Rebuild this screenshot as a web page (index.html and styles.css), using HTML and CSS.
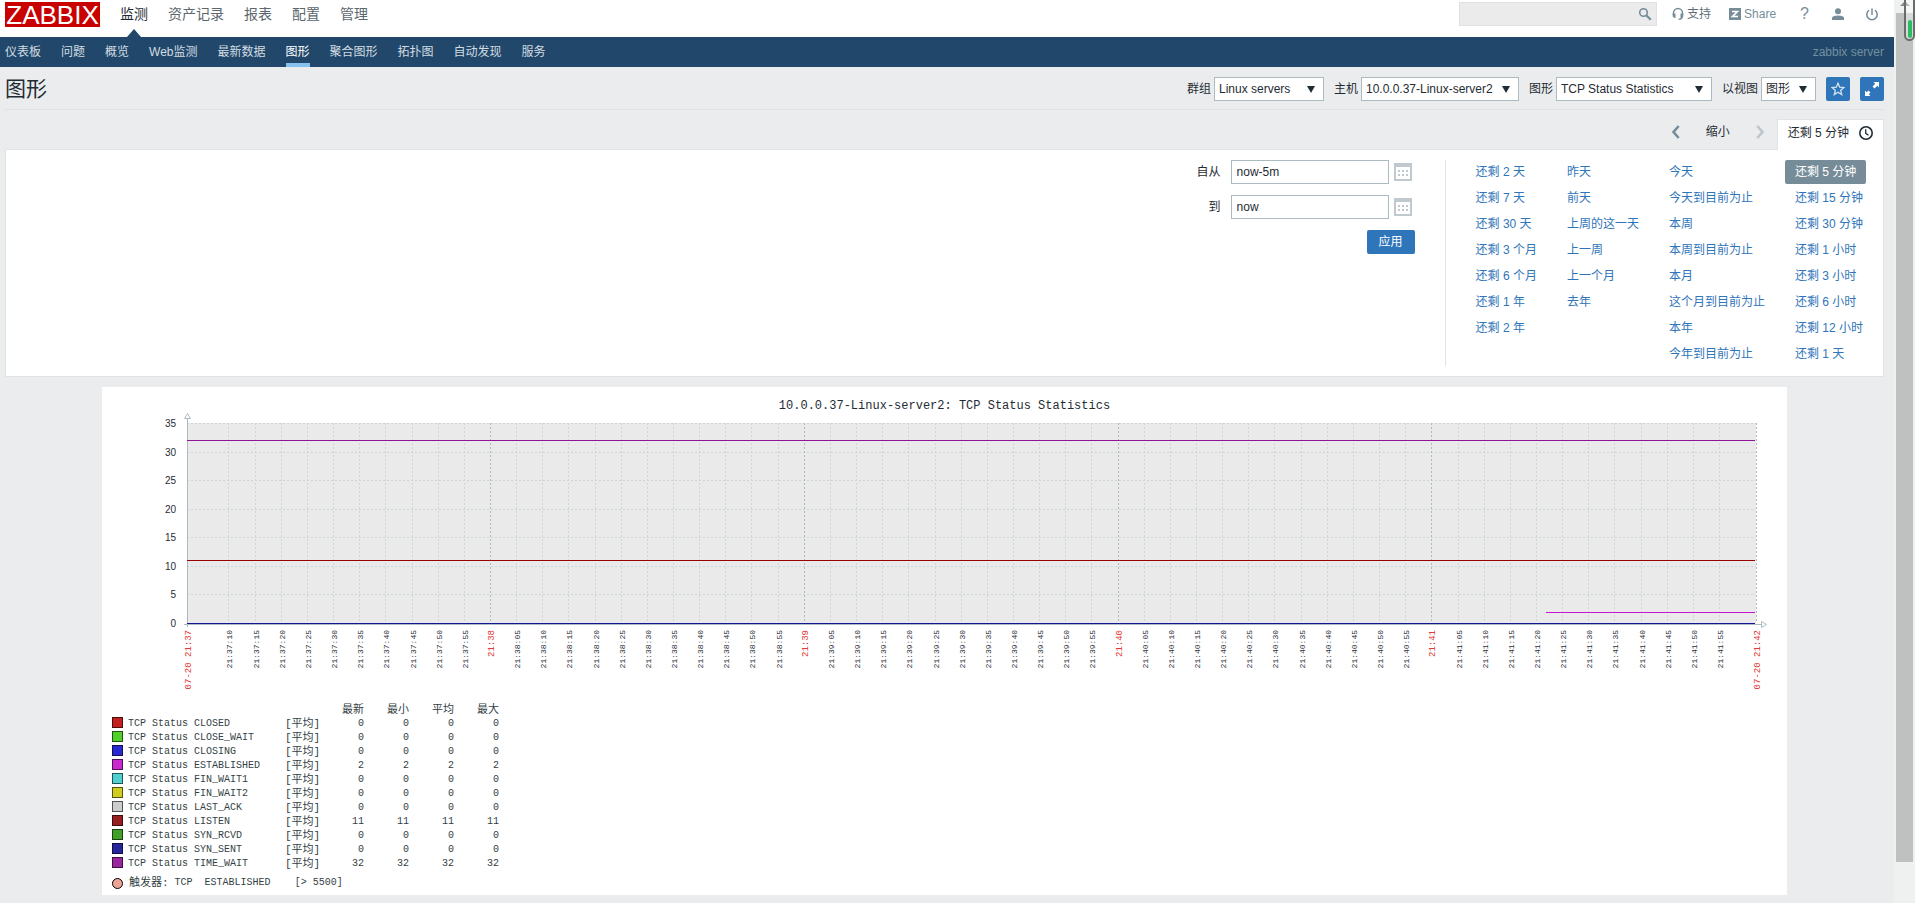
FILE: index.html
```html
<!DOCTYPE html>
<html lang="zh-CN">
<head>
<meta charset="utf-8">
<title>图形</title>
<link rel="stylesheet" href="styles.css">
</head>
<body>
<div class="page">
  <header class="top">
    <a class="logo" href="#">ZABBIX</a>
    <nav class="menu">
      <a class="active" href="#">监测</a>
      <a href="#">资产记录</a>
      <a href="#">报表</a>
      <a href="#">配置</a>
      <a href="#">管理</a>
    </nav>
    <form class="search">
      <input type="text" aria-label="搜索">
      <button type="button" aria-label="搜索">
        <svg width="14" height="14" viewBox="0 0 14 14" fill="none" stroke="#768d99"><circle cx="5.500" cy="5.500" r="3.800" stroke-width="1.600"/><path d="M8.300 8.300l4.500 4.500" stroke-width="2.200"/></svg>
      </button>
    </form>
    <div class="tools">
      <a class="support" href="#"><svg width="12" height="14" viewBox="0 0 12 14"><path d="M1.500 8V6a4.500 4.500 0 0 1 9 0v2" fill="none" stroke="#768d99" stroke-width="1.500"/><path d="M.7 6.500h2.800v4.500H2.500L.7 9.500zM11.300 6.500H8.500v4.500h1l1.800-1.500z" fill="#768d99"/><path d="M10.300 9.500c0 2-1 2.700-3.600 2.700" fill="none" stroke="#768d99" stroke-width="1.400"/></svg>支持</a>
      <a class="share" href="#"><svg width="12" height="12" viewBox="0 0 12 12"><path fill="#768d99" d="M0 0h12v12H0z"/><path d="M3 3.500h5.500L3.500 8.500H9" fill="none" stroke="#fff" stroke-width="1.600"/></svg>Share</a>
      <a class="help" href="#">?</a>
      <a class="icon" href="#" aria-label="用户"><svg width="12" height="12" viewBox="0 0 12 12" fill="#768d99"><circle cx="6" cy="3.200" r="3"/><path d="M0 12V10c0-1.700 2-2.600 6-2.600s6 .9 6 2.600v2z"/></svg></a>
      <a class="icon" href="#" aria-label="退出"><svg width="12" height="13" viewBox="0 0 12 13" fill="none" stroke="#768d99" stroke-width="1.500"><path d="M6 0.500v6.500M3 2.300a5.200 5.200 0 1 0 6 0"/></svg></a>
    </div>
  </header>
  <nav class="subnav">
    <a href="#">仪表板</a>
    <a href="#">问题</a>
    <a href="#">概览</a>
    <a href="#">Web监测</a>
    <a href="#">最新数据</a>
    <a class="active" href="#">图形</a>
    <a href="#">聚合图形</a>
    <a href="#">拓扑图</a>
    <a href="#">自动发现</a>
    <a href="#">服务</a>
    <span class="server">zabbix server</span>
  </nav>
  <main>
    <div class="title-row">
      <h1>图形</h1>
      <form class="filters">
        <div class="field"><label for="group">群组</label><span class="select w-group"><select id="group"><option>Linux servers</option></select></span></div>
        <div class="field"><label for="host">主机</label><span class="select w-host"><select id="host"><option>10.0.0.37-Linux-server2</option></select></span></div>
        <div class="field"><label for="graph">图形</label><span class="select w-graph"><select id="graph"><option>TCP Status Statistics</option></select></span></div>
        <div class="field"><label for="view">以视图</label><span class="select w-view"><select id="view"><option>图形</option></select></span></div>
        <button class="square" type="button" aria-label="收藏"><svg width="14" height="14" viewBox="0 0 14 14"><path d="M7 1.200l1.700 4 4.300.3-3.300 2.800 1 4.200L7 10.200l-3.700 2.300 1-4.200L1 5.500l4.300-.3z" fill="none" stroke="#d5e4f2" stroke-width="1.300"/></svg></button>
        <button class="square" type="button" aria-label="全屏"><svg width="14" height="14" viewBox="0 0 14 14" fill="#fff"><path d="M8.500 0H14v5.500l-1.700-1.700L9.600 6.500 7.500 4.400l2.700-2.700zM5.500 14H0V8.500l1.700 1.700 1.700-1.700 2.100 2.100-1.700 1.700z"/></svg></button>
      </form>
    </div>

    <div class="time-tabs">
      <button class="arrow" type="button" aria-label="后退"><svg width="8" height="14" viewBox="0 0 8 14"><path d="M6.700 1L1.500 7l5.200 6" fill="none" stroke="#768d99" stroke-width="2.600"/></svg></button>
      <button class="zoom-out" type="button">缩小</button>
      <button class="arrow" type="button" aria-label="前进" disabled><svg width="8" height="14" viewBox="0 0 8 14"><path d="M1.300 1l5.200 6-5.200 6" fill="none" stroke="#bcc6cc" stroke-width="2.600"/></svg></button>
      <a class="tab" href="#">还剩 5 分钟<svg width="14" height="14" viewBox="0 0 14 14" fill="none" stroke="#1f2c33"><circle cx="7" cy="7" r="6.200" stroke-width="1.600"/><path d="M6.700 3.200v4.200l2.800 1.800" stroke-width="1.300"/></svg></a>
    </div>

    <section class="time-filter">
      <form class="range">
        <div class="range-row"><label for="from">自从</label><input id="from" type="text" value="now-5m"><button class="cal" type="button" aria-label="日历"><svg width="18" height="18" viewBox="0 0 18 18"><rect x="1" y="1" width="16" height="16" fill="#fff" stroke="#c0c9ce" stroke-width="2"/><path fill="#c0c9ce" d="M0 0h18v4H0zM4 7h2v2H4zM8 7h2v2H8zM12 7h2v2h-2zM4 11h2v2H4zM8 11h2v2H8zM12 11h2v2h-2z"/></svg></button></div>
        <div class="range-row"><label for="to">到</label><input id="to" type="text" value="now"><button class="cal" type="button" aria-label="日历"><svg width="18" height="18" viewBox="0 0 18 18"><rect x="1" y="1" width="16" height="16" fill="#fff" stroke="#c0c9ce" stroke-width="2"/><path fill="#c0c9ce" d="M0 0h18v4H0zM4 7h2v2H4zM8 7h2v2H8zM12 7h2v2h-2zM4 11h2v2H4zM8 11h2v2H8zM12 11h2v2h-2z"/></svg></button></div>
        <button class="apply" type="button">应用</button>
      </form>
      <div class="quick">
        <ul><li><a href="#">还剩 2 天</a></li><li><a href="#">还剩 7 天</a></li><li><a href="#">还剩 30 天</a></li><li><a href="#">还剩 3 个月</a></li><li><a href="#">还剩 6 个月</a></li><li><a href="#">还剩 1 年</a></li><li><a href="#">还剩 2 年</a></li></ul>
        <ul><li><a href="#">昨天</a></li><li><a href="#">前天</a></li><li><a href="#">上周的这一天</a></li><li><a href="#">上一周</a></li><li><a href="#">上一个月</a></li><li><a href="#">去年</a></li></ul>
        <ul><li><a href="#">今天</a></li><li><a href="#">今天到目前为止</a></li><li><a href="#">本周</a></li><li><a href="#">本周到目前为止</a></li><li><a href="#">本月</a></li><li><a href="#">这个月到目前为止</a></li><li><a href="#">本年</a></li><li><a href="#">今年到目前为止</a></li></ul>
        <ul><li><a class="selected" href="#">还剩 5 分钟</a></li><li><a href="#">还剩 15 分钟</a></li><li><a href="#">还剩 30 分钟</a></li><li><a href="#">还剩 1 小时</a></li><li><a href="#">还剩 3 小时</a></li><li><a href="#">还剩 6 小时</a></li><li><a href="#">还剩 12 小时</a></li><li><a href="#">还剩 1 天</a></li></ul>
      </div>
    </section>

    <figure class="graph">
      <figcaption>10.0.0.37-Linux-server2: TCP Status Statistics</figcaption>
      <svg id="plot" class="plot" role="img" aria-label="TCP Status Statistics"></svg>
      <table class="legend">
        <thead><tr><th class="name"></th><th class="fn"></th><th>最新</th><th>最小</th><th>平均</th><th>最大</th></tr></thead>
        <tbody>
          <tr><td><i class="sw closed"></i>TCP Status CLOSED</td><td>[平均]</td><td>0</td><td>0</td><td>0</td><td>0</td></tr>
          <tr><td><i class="sw close-wait"></i>TCP Status CLOSE_WAIT</td><td>[平均]</td><td>0</td><td>0</td><td>0</td><td>0</td></tr>
          <tr><td><i class="sw closing"></i>TCP Status CLOSING</td><td>[平均]</td><td>0</td><td>0</td><td>0</td><td>0</td></tr>
          <tr><td><i class="sw established"></i>TCP Status ESTABLISHED</td><td>[平均]</td><td>2</td><td>2</td><td>2</td><td>2</td></tr>
          <tr><td><i class="sw fin1"></i>TCP Status FIN_WAIT1</td><td>[平均]</td><td>0</td><td>0</td><td>0</td><td>0</td></tr>
          <tr><td><i class="sw fin2"></i>TCP Status FIN_WAIT2</td><td>[平均]</td><td>0</td><td>0</td><td>0</td><td>0</td></tr>
          <tr><td><i class="sw last-ack"></i>TCP Status LAST_ACK</td><td>[平均]</td><td>0</td><td>0</td><td>0</td><td>0</td></tr>
          <tr><td><i class="sw listen"></i>TCP Status LISTEN</td><td>[平均]</td><td>11</td><td>11</td><td>11</td><td>11</td></tr>
          <tr><td><i class="sw syn-rcvd"></i>TCP Status SYN_RCVD</td><td>[平均]</td><td>0</td><td>0</td><td>0</td><td>0</td></tr>
          <tr><td><i class="sw syn-sent"></i>TCP Status SYN_SENT</td><td>[平均]</td><td>0</td><td>0</td><td>0</td><td>0</td></tr>
          <tr><td><i class="sw time-wait"></i>TCP Status TIME_WAIT</td><td>[平均]</td><td>32</td><td>32</td><td>32</td><td>32</td></tr>
        </tbody>
      </table>
      <p class="trigger"><i class="dot"></i><span class="cjk">触发器:</span><span>TCP&nbsp; ESTABLISHED</span><span class="cond">[&gt; 5500]</span></p>
    </figure>
  </main>
</div>
<div class="scrollbar" aria-hidden="true">
  <div class="up"></div>
  <div class="thumb"></div>
  <div class="gauge"></div>
</div>
<script src="plot.js"></script>
</body>
</html>
```
FILE: plot.js
```js
// Draws the axes, grid and series of the graph at the width of its panel.
(function () {
  var svg = document.getElementById('plot');
  var NS = 'http://www.w3.org/2000/svg';
  var LEFT = 85, RIGHT = 31, TOP = 10, HEIGHT = 200, MAX = 35;
  var SPAN = 300, START = 2.07, FIRST_MINUTE = 37;

  function add(tag, attrs, text) {
    var el = document.createElementNS(NS, tag);
    Object.keys(attrs).forEach(function (k) { el.setAttribute(k, attrs[k]); });
    if (text !== undefined) el.textContent = text;
    svg.appendChild(el);
  }
  function line(cls, x1, y1, x2, y2) {
    add('line', { 'class': cls, x1: x1, y1: y1, x2: x2, y2: y2 });
  }
  function label(cls, x, text) {
    add('text', { 'class': cls, transform: 'translate(' + (x + 4) + ' 217) rotate(-90)' }, text);
  }
  function two(n) { return (n < 10 ? '0' : '') + n; }

  function draw() {
    var width = svg.clientWidth - LEFT - RIGHT;
    var end = LEFT + width, bottom = TOP + HEIGHT;
    var y = function (v) { return Math.round(bottom - v * HEIGHT / MAX) + 0.5; };
    svg.textContent = '';
    add('rect', { 'class': 'area', x: LEFT, y: TOP, width: width, height: HEIGHT });

    for (var v = 0; v <= MAX; v += 5) {
      if (v) line('grid', LEFT, y(v), end, y(v));
      add('text', { 'class': 'value', x: 74, y: Math.floor(y(v)) + 4 }, v);
    }
    for (var t = 10; t < 300; t += 5) {
      var x = LEFT + Math.round((t - START) * width / SPAN);
      var minute = FIRST_MINUTE + Math.floor(t / 60);
      var major = t % 60 === 0;
      line(major ? 'grid major' : 'grid', x + 0.5, TOP, x + 0.5, bottom);
      label(major ? 'time major' : 'time', x, '21:' + minute + (major ? '' : ':' + two(t % 60)));
    }
    line('grid major', end + 0.5, TOP, end + 0.5, bottom);
    label('time major', LEFT, '07-20 21:37');
    label('time major', end, '07-20 21:42');

    line('axis', LEFT + 0.5, 5, LEFT + 0.5, bottom + 4);
    line('axis', LEFT - 3, bottom + 1.5, end + 5, bottom + 1.5);
    add('path', { 'class': 'tip', d: 'M' + (LEFT - 2.5) + ' 5.5h6l-3-5z' });
    add('path', { 'class': 'tip', d: 'M' + (end + 5.5) + ' ' + (bottom - 1.5) + 'v6l5-3z' });

    line('series time-wait', LEFT, y(32), end - 1, y(32));
    line('series listen', LEFT, y(11), end - 1, y(11));
    line('series established', LEFT + Math.round(width * 0.866), y(2), end - 1, y(2));
    line('series syn-sent', LEFT, y(0), end - 1, y(0));
  }
  draw();
  window.addEventListener('resize', draw);
})();
```
FILE: styles.css
```css
* { box-sizing: border-box; }
body {
  margin: 0;
  display: flex;
  min-height: 100vh;
  background: #ebecee;
  color: #1f2c33;
  font: 12px/14px "Liberation Sans", "Noto Sans CJK SC", sans-serif;
}
a { text-decoration: none; color: inherit; }
button, input, select { font: inherit; color: inherit; margin: 0; }
button { padding: 0; border: 0; background: none; cursor: pointer; }
svg { display: block; }
.page { flex: 1; min-width: 0; }

/* header */
.top { display: flex; align-items: flex-start; height: 37px; padding: 2px 16px 0 5px; background: #fff; }
.logo { width: 95px; height: 25px; background: #c80000; color: #fff; font: 26px/26px "Liberation Sans", sans-serif; text-align: center; }
.menu { display: flex; gap: 20px; margin-left: 20px; font-size: 14px; line-height: 24px; color: #5c676e; }
.menu a { position: relative; height: 35px; }
.menu .active { color: #1f2c33; }
.menu .active::after {
  content: ""; position: absolute; left: 50%; bottom: 0; margin-left: -7px;
  border: 7px solid transparent; border-top: 0; border-bottom: 8px solid #21486a;
}
.search { display: flex; position: relative; margin-left: auto; }
.search input { width: 198px; height: 24px; padding: 0 28px 0 5px; border: 1px solid #dfe1e2; background: #ebebeb; }
.search button { position: absolute; right: 5px; top: 5px; }
.tools { display: flex; align-items: center; height: 24px; margin-left: 15px; color: #768d99; }
.tools a { display: flex; align-items: center; }
.support { gap: 3px; color: #5f6d75; }
.share { gap: 3px; margin-left: 18px; }
.help { margin-left: 20px; padding: 0 4px; font-size: 16px; }
.icon { width: 34px; justify-content: flex-end; }
.help + .icon { width: 31px; }

.subnav { display: flex; gap: 20px; height: 30px; padding: 0 10px 0 5px; background: #21486a; color: #d3dce3; line-height: 30px; }
.subnav a { height: 30px; }
.subnav .active { color: #fff; border-bottom: 4px solid #87c2ee; }
.server { margin-left: auto; color: #7290a0; }

/* title and selectors */
main { padding: 0 10px 8px 5px; }
.title-row { display: flex; justify-content: space-between; padding: 10px 0 8px; border-bottom: 1px solid #dfe2e4; }
h1 { margin: 0; font-size: 21px; line-height: 24px; font-weight: 400; }
.filters, .field { display: flex; align-items: center; }
.filters { gap: 10px; }
.field { gap: 3px; }
.select { position: relative; display: block; }
.select select {
  display: block; width: 100%; height: 24px; padding: 0 24px 0 4px;
  appearance: none; border: 1px solid #acbbc2; border-radius: 0; background: #fff;
}
.select::after {
  content: ""; position: absolute; right: 9px; top: 9px; pointer-events: none;
  border: 4px solid transparent; border-top: 7px solid #1f2c33; border-bottom: 0;
}
.w-group { width: 110px; }
.w-host { width: 158px; }
.w-graph { width: 156px; }
.w-view { width: 55px; }
.square { display: flex; align-items: center; justify-content: center; width: 24px; height: 24px; border-radius: 2px; background: #2f75b9; }

/* time selector */
.time-tabs { display: flex; align-items: center; justify-content: flex-end; height: 39px; padding-top: 9px; }
.arrow { width: 24px; display: flex; justify-content: center; padding-bottom: 4px; }
.zoom-out { width: 60px; padding-bottom: 4px; }
.tab {
  display: flex; align-items: center; gap: 10px; height: 31px; margin: 0 0 -1px 5px; padding: 0 10px 5px;
  position: relative; border: 1px solid #dfe4e7; border-bottom: 0; background: #fff;
}
.time-filter { display: flex; justify-content: flex-end; padding: 10px 0; border: 1px solid #dfe4e7; background: #fff; }
.range { display: flex; flex-direction: column; align-items: flex-end; gap: 11px; padding-right: 30px; }
.range-row { display: flex; align-items: center; padding-right: 3px; }
.range-row input { width: 158px; height: 24px; margin-left: 10px; padding: 0 5px; border: 1px solid #acbbc2; }
.cal { margin-left: 5px; }
.apply { width: 48px; height: 24px; border-radius: 2px; background: #2f75b9; color: #fff; }
.quick { display: flex; gap: 10px; padding: 0 10px 0 20px; border-left: 1px solid #dfe4e7; }
.quick ul { display: flex; flex-direction: column; gap: 2px; margin: 0; padding: 0; list-style: none; white-space: nowrap; }
.quick li { display: flex; }
.quick a { padding: 0 10px; border-radius: 2px; color: #2f75b9; line-height: 24px; }
.quick .selected { background: #768d99; color: #fff; }

/* graph */
.graph { margin: 10px 97px 0; padding-bottom: 5px; background: #fff; color: #333f45; font: 10px/14px "Liberation Mono", "Noto Sans CJK SC", monospace; }
.graph figcaption { padding-top: 13px; font-size: 12px; line-height: 13px; text-align: center; color: #1f2c33; }
.plot { width: 100%; height: 290px; overflow: visible; }
.plot line { stroke-width: 1; shape-rendering: crispEdges; }
.area { fill: #eaeaea; }
.grid { stroke: #ccd5d9; stroke-dasharray: 2 2; }
.grid.major { stroke: #acbbc2; }
.axis { stroke: #acbbc2; }
.tip { fill: #fff; stroke: #acbbc2; }
.value { font: 10px "Liberation Sans", sans-serif; text-anchor: end; fill: #1f2c33; }
.time { font-size: 8px; text-anchor: end; fill: #1f2c33; }
.time.major { font-size: 9px; fill: #e33734; }
.series.time-wait { stroke: #8e1596; }
.series.listen { stroke: #960000; }
.series.established { stroke: #c416cc; }
.series.syn-sent { stroke: #141496; }

.legend { margin-left: 10px; border-collapse: collapse; table-layout: fixed; width: 387px; }
.legend th, .legend td { height: 14px; padding: 0; font-weight: 400; text-align: right; white-space: nowrap; }
.legend td:first-child, .legend td:nth-child(2) { text-align: left; }
.legend th, .legend td:nth-child(2), .cjk { font-size: 11px; }
.legend .name { width: 173px; }
.legend .fn { width: 34px; }
.sw, .dot { display: inline-block; width: 11px; height: 11px; margin-right: 5px; border: 1px solid rgba(0, 0, 0, 0.6); vertical-align: -2px; }
.sw.closed { background: #c41f1f; }
.sw.close-wait { background: #50d02a; }
.sw.closing { background: #282ad0; }
.sw.established { background: #c82ad0; }
.sw.fin1 { background: #50cfd0; }
.sw.fin2 { background: #cfcc22; }
.sw.last-ack { background: #cdcdcd; }
.sw.listen { background: #981f1f; }
.sw.syn-rcvd { background: #40a028; }
.sw.syn-sent { background: #26269c; }
.sw.time-wait { background: #98269c; }
.trigger { display: flex; align-items: center; gap: 6px; margin: 5px 0 0 10px; }
.dot { margin: 0; border-color: #000; border-radius: 50%; background: #eca496; }
.cond { margin-left: 18px; }

/* scroll bar */
.scrollbar { position: relative; flex: none; width: 21px; background: #eff1f0; overflow: hidden; }
.thumb { width: 17px; height: 94vh; margin: 0 2px; background: #bfc1c0; }
.up { width: 10px; height: 6px; margin: 0 0 7px 6px; border: 5px solid transparent; border-top-width: 1px; border-bottom-color: #868888; }
.gauge { position: absolute; right: 0; top: -12px; width: 11px; height: 53px; border: 2px solid #6b6b6b; border-radius: 6px; background: rgba(255, 255, 255, 0.4); }
.gauge::after { content: ""; position: absolute; left: 2px; right: 1px; bottom: 1px; height: 18px; border-radius: 3px; background: #27be62; }
```
